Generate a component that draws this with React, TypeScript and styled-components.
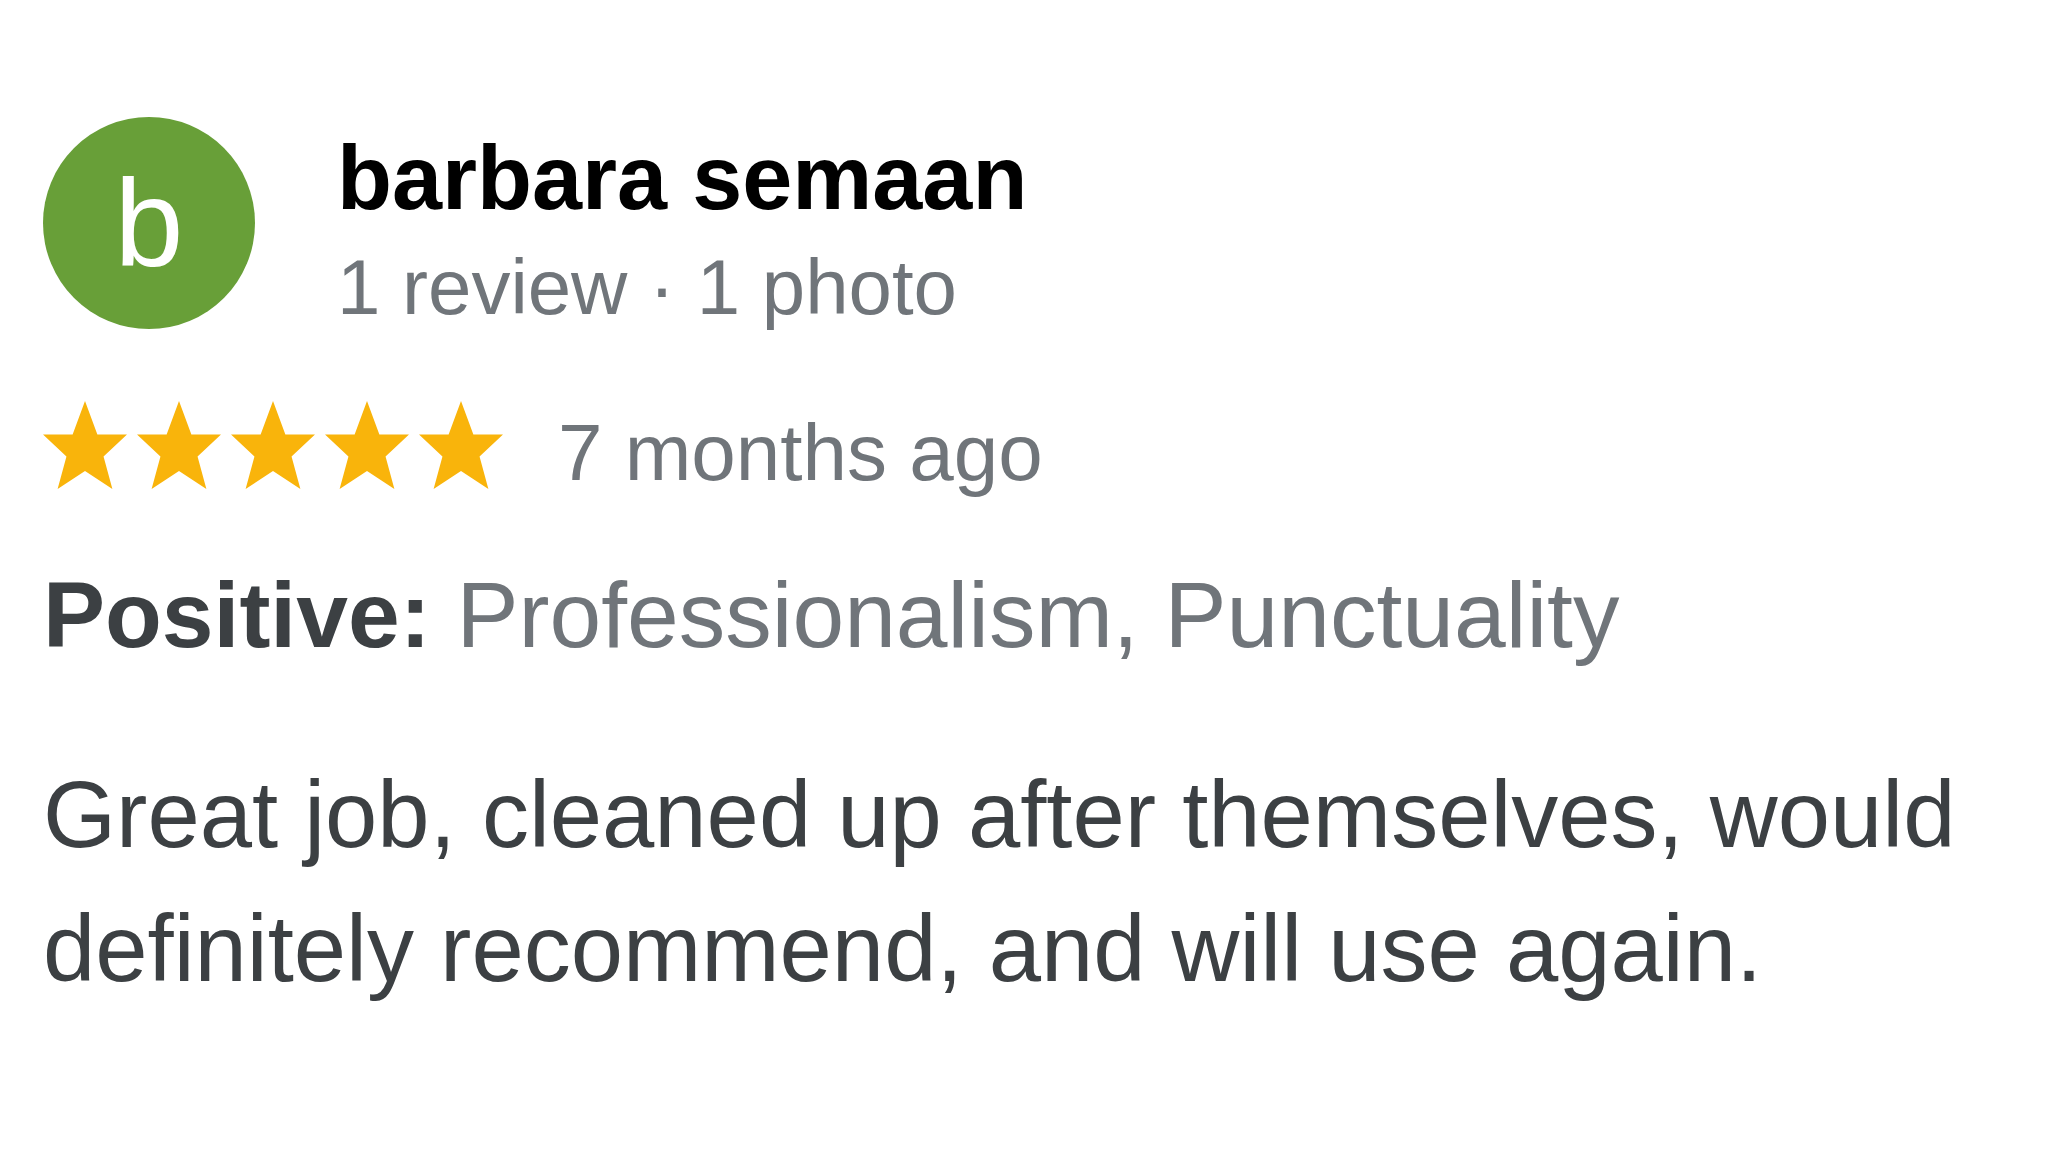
import React from "react";
import styled, { createGlobalStyle } from "styled-components";

const GlobalStyle = createGlobalStyle`
  html, body {
    margin: 0;
    padding: 0;
    background: #ffffff;
  }
  body {
    font-family: "Liberation Sans", Arial, Helvetica, sans-serif;
  }
`;

const Page = styled.main`
  width: 2048px;
  min-height: 1152px;
  box-sizing: border-box;
  padding: 117px 30px 0 43px;
  background: #ffffff;
  display: flex;
  flex-direction: column;
`;

const Header = styled.header`
  display: flex;
  align-items: flex-start;
  gap: 82px;
`;

const Avatar = styled.div`
  width: 212px;
  height: 212px;
  border-radius: 50%;
  background: #689f38;
  color: #ffffff;
  display: flex;
  align-items: center;
  justify-content: center;
  font-size: 124px;
  line-height: 1;
  flex-shrink: 0;
`;

const Who = styled.div`
  display: flex;
  flex-direction: column;
  gap: 12px;
  margin-top: 10px;
`;

const Name = styled.div`
  font-size: 90px;
  font-weight: 700;
  line-height: 1.15;
  color: #000000;
`;

const Meta = styled.div`
  font-size: 78px;
  line-height: 1.15;
  color: #70757a;
`;

const RatingRow = styled.div`
  display: flex;
  align-items: flex-start;
  margin-top: 69px;
`;

const Stars = styled.div`
  display: flex;
  gap: 10px;
`;

const StarIcon = styled.svg`
  width: 84px;
  height: 88px;
  display: block;
  fill: #f9b40b;
`;

const When = styled.div`
  margin-left: 55px;
  margin-top: 6px;
  font-size: 80px;
  line-height: 92px;
  color: #70757a;
`;

const Attributes = styled.p`
  margin: 49px 0 0;
  font-size: 93px;
  line-height: 134px;
  color: #70757a;
`;

const Label = styled.span`
  font-weight: 700;
  color: #3c4043;
`;

const Body = styled.p`
  margin: 66px 0 0;
  font-size: 94px;
  line-height: 134px;
  color: #3c4043;
`;

const STAR_POINTS =
  "0,-1 0.28,-0.309 0.951,-0.309 0.42,0.14 0.62,0.809 0,0.44 -0.62,0.809 -0.42,0.14 -0.951,-0.309 -0.28,-0.309";

const Star = () => (
  <StarIcon viewBox="-0.951 -1 1.902 1.809" preserveAspectRatio="none" aria-hidden="true">
    <polygon points={STAR_POINTS} />
  </StarIcon>
);

export default function App() {
  return (
    <>
      <GlobalStyle />
      <Page>
        <Header>
          <Avatar>b</Avatar>
          <Who>
            <Name>barbara semaan</Name>
            <Meta>1 review · 1 photo</Meta>
          </Who>
        </Header>
        <RatingRow>
          <Stars aria-label="5 stars">
            {[0, 1, 2, 3, 4].map((i) => (
              <Star key={i} />
            ))}
          </Stars>
          <When>7 months ago</When>
        </RatingRow>
        <Attributes>
          <Label>Positive:</Label> Professionalism, Punctuality
        </Attributes>
        <Body>
          Great job, cleaned up after themselves, would definitely recommend, and will use again.
        </Body>
      </Page>
    </>
  );
}
